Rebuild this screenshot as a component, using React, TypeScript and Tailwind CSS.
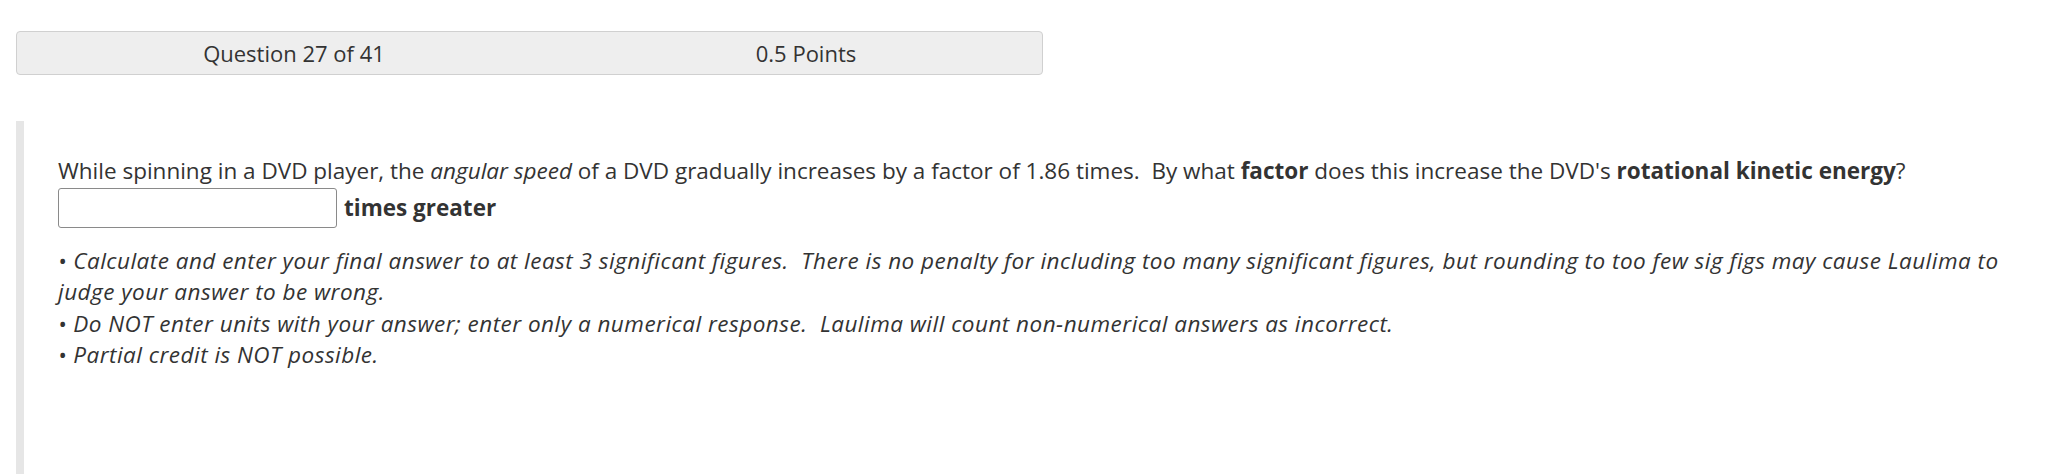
export default function App() {
  return (
    <div className="min-h-[474px] bg-white pt-[31px] text-[#333] font-['Open_Sans',sans-serif]">
      {/* question header */}
      <div className="ml-4 grid h-[44px] w-[1027px] grid-cols-[512px_512px] items-center rounded-[4px] border border-[#d0d0d0] bg-[#eeeeee] pl-[21px] pt-[1px] text-[22px]">
        <div className="text-center">Question 27 of 41</div>
        <div className="text-center">0.5 Points</div>
      </div>

      <div className="ml-4 mt-[46px] min-h-[353px] border-l-[8px] border-[#e6e6e6] pl-[34px] pr-[20px] pt-[34px] text-[22.5px] leading-[31.5px]">
        <p>
          While spinning in a DVD player, the <em>angular speed</em> of a DVD gradually increases by a factor of 1.86 times.&nbsp; By what <strong>factor</strong> does this increase the DVD's <strong>rotational kinetic energy</strong>?
        </p>
        <div className="mt-[1px] flex items-center gap-[7px]">
          <input type="text" className="h-[40px] w-[279px] rounded-[3px] border border-[#8a8a8a] bg-white" />
          <span className="font-bold">times greater</span>
        </div>
        <div className="mt-[17px] italic tracking-[0.48px]">
          <p>• Calculate and enter your final answer to at least 3 significant figures.&nbsp; There is no penalty for including too many significant figures, but rounding to too few sig figs may cause Laulima to judge your answer to be wrong.</p>
          <p>• Do NOT enter units with your answer; enter only a numerical response.&nbsp; Laulima will count non-numerical answers as incorrect.</p>
          <p>• Partial credit is NOT possible.</p>
        </div>
      </div>
    </div>
  );
}
